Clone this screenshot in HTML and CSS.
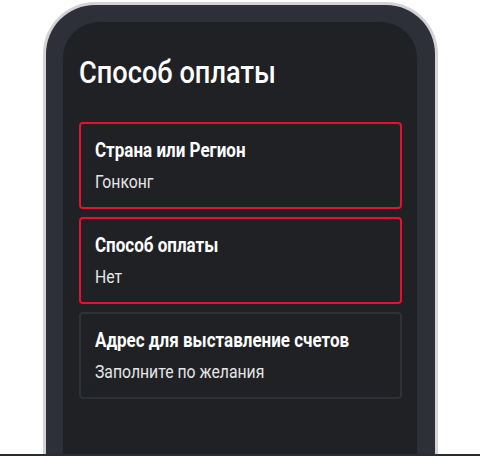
FILE: index.html
```html
<!DOCTYPE html>
<html lang="ru">

<head>
    <meta charset="UTF-8">
    <meta name="viewport" content="width=device-width, initial-scale=1.0">
    <title>Способ оплаты</title>
    <link rel="stylesheet" href="styles.css">
</head>

<body>
    <div class="stage">
        <div class="phone">
            <div class="screen">
                <h1 class="titulo">Способ оплаты</h1>

                <div class="campo campo-erro">
                    <p class="rotulo">Страна или Регион</p>
                    <p class="valor">Гонконг</p>
                </div>

                <div class="campo campo-erro">
                    <p class="rotulo">Способ оплаты</p>
                    <p class="valor">Нет</p>
                </div>

                <div class="campo">
                    <p class="rotulo">Адрес для выставление счетов</p>
                    <p class="valor">Заполните по желания</p>
                </div>
            </div>
        </div>
    </div>
    <div class="linha-base"></div>
</body>
</html>
```

FILE: styles.css
```css
* {
    box-sizing: border-box;
}

body {
    margin: 0;
    background-color: #ffffff;
    font-family: "Roboto", "Liberation Sans", sans-serif;
}

.stage {
    height: 454px;
    overflow: hidden;
}

.linha-base {
    height: 2px;
    background-color: #2b2d33;
}

.phone {
    margin-left: 43px;
    margin-top: 2px;
    width: 395px;
    height: 480px;
    border: 3px solid #d3d3d5;
    border-bottom: 0;
    border-radius: 52px 52px 0 0;
    background-color: #2e3039;
    padding: 17px 18px 0 17px;
}

.screen {
    height: 100%;
    background-color: #202125;
    border-radius: 36px 36px 0 0;
    padding: 30px 15px 0 16px;
    display: flex;
    flex-direction: column;
    gap: 8px;
}

/* fonte estreita: roboto comprimido na horizontal */
.titulo,
.rotulo,
.valor {
    white-space: nowrap;
    transform: scaleX(0.85);
    transform-origin: left center;
}

.titulo {
    margin: 0 0 22px 0;
    color: #ffffff;
    font-size: 32px;
    font-weight: 500;
    line-height: 40px;
}

.campo {
    height: 87px;
    border: 2px solid #2f3139;
    border-radius: 4px;
    padding: 14px 14px 0 14px;
}

.campo-erro {
    border-color: #e8112d;
}

.rotulo {
    margin: 0;
    color: #ffffff;
    font-size: 20px;
    font-weight: bold;
    line-height: 24px;
}

.valor {
    margin: 8px 0 0 0;
    color: #e6e6e6;
    font-size: 19px;
    line-height: 24px;
    transform: scaleX(0.83);
}
```
